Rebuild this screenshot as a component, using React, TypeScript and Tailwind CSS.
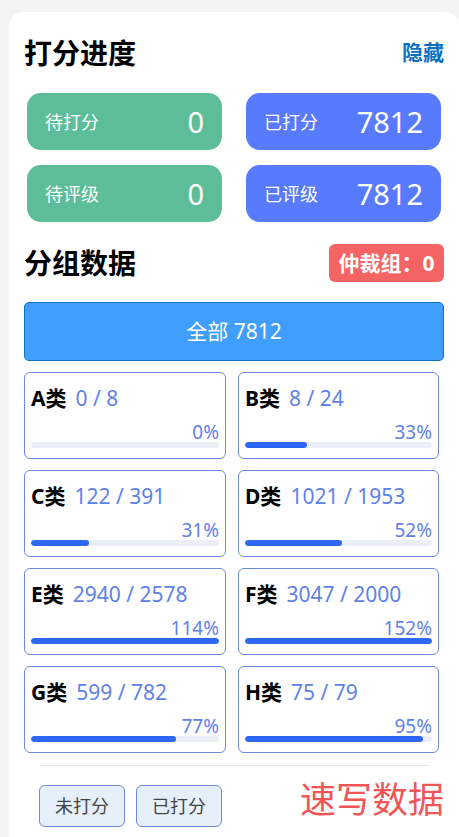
const font = { fontFamily: '"Noto Sans", "Noto Sans CJK SC", sans-serif' };

function Stat({ label, value, green }: { label: string; value: string; green?: boolean }) {
  return (
    <div className={`flex h-[57px] w-[195px] items-center justify-between rounded-[14px] px-[18px] text-white ${green ? "bg-[#5cbd98]" : "bg-[#587bfd]"}`}>
      <span className="text-[18px] leading-none">{label}</span>
      <span className="text-[29px] leading-none">{value}</span>
    </div>
  );
}

function Group({ name, count, pct }: { name: string; count: string; pct: number }) {
  return (
    <div className="flex h-[87px] flex-col rounded-[6px] border border-[#6d8adb] bg-white px-[6px] pb-[10px]">
      <div className="mt-[15px] flex items-center gap-[9px] leading-none">
        <span className="text-[21px] font-bold text-black">{name}</span>
        <span className="text-[21px] text-[#5f82e6]">{count}</span>
      </div>
      <div className="mt-auto text-right text-[19px] leading-[20px] text-[#5f82e6]">{pct}%</div>
      <div className="h-[6px] overflow-hidden rounded-full bg-[#ebeef5]">
        <div className="h-full rounded-full bg-[#2f66f3]" style={{ width: `${Math.min(pct, 100)}%` }} />
      </div>
    </div>
  );
}

const groups = [
  ["A类", "0 / 8", 0],
  ["B类", "8 / 24", 33],
  ["C类", "122 / 391", 31],
  ["D类", "1021 / 1953", 52],
  ["E类", "2940 / 2578", 114],
  ["F类", "3047 / 2000", 152],
  ["G类", "599 / 782", 77],
  ["H类", "75 / 79", 95],
] as const;

export default function App() {
  return (
    <div className="h-[837px] w-[459px] overflow-hidden bg-[#f4f4f5] pl-[9px] pt-[12px]" style={font}>
      <div className="h-[825px] rounded-t-[14px] bg-white px-[15px]">
        <div className="flex h-[81px] items-center justify-between">
          <span className="text-[28px] leading-none font-bold text-black">打分进度</span>
          <span className="text-[21px] leading-none font-bold text-[#0a70c0]">隐藏</span>
        </div>
        <div className="ml-[3px] grid w-[414px] grid-cols-[195px_195px] gap-x-[24px] gap-y-[15px]">
          <Stat label="待打分" value="0" green />
          <Stat label="已打分" value="7812" />
          <Stat label="待评级" value="0" green />
          <Stat label="已评级" value="7812" />
        </div>
        <div className="mt-[22px] flex h-[38px] items-center justify-between">
          <span className="text-[28px] leading-none font-bold text-black">分组数据</span>
          <span className="flex h-[38px] w-[115px] items-center justify-center rounded-[6px] bg-[#f56464] text-[21px] leading-none font-bold text-white">仲裁组：0</span>
        </div>
        <div className="mt-[20px] flex h-[59px] items-center justify-center rounded-[5px] border border-[#0a70c0] bg-[#409eff] text-[21px] leading-none text-white">
          全部 7812
        </div>
        <div className="mt-[11px] grid w-[415px] grid-cols-[202px_201px] gap-x-[12px] gap-y-[11px]">
          {groups.map(([n, c, p]) => (
            <Group key={n} name={n} count={c} pct={p} />
          ))}
        </div>
        <div className="ml-[16px] mr-[15px] mt-[12px] h-px bg-[#e6e6e6]" />
        <div className="mt-[6px] flex items-start justify-between">
          <div className="ml-[15px] mt-[13px] flex gap-[11px]">
            <button className="h-[42px] w-[86px] rounded-[6px] border border-[#6d8adb] bg-[#e6f0fb] text-[18px] text-[#444]">未打分</button>
            <button className="h-[42px] w-[86px] rounded-[6px] border border-[#6d8adb] bg-[#e6f0fb] text-[18px] text-[#444]">已打分</button>
          </div>
          <span className="text-[36px] leading-[56px] text-[#f05656]">速写数据</span>
        </div>
      </div>
    </div>
  );
}
